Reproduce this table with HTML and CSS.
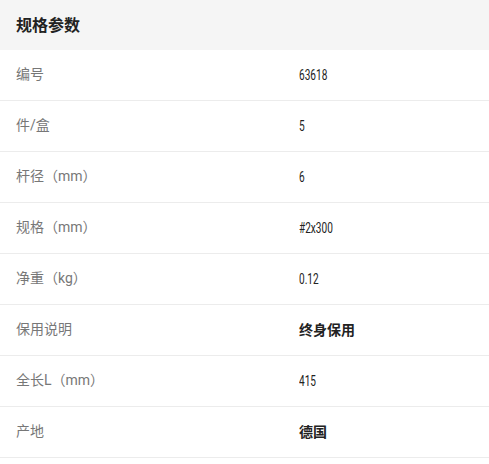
FILE: index.html
```html
<!DOCTYPE html>
<html lang="zh">
<head>
<meta charset="utf-8">
<link rel="stylesheet" href="styles.css">
</head>
<body>
<div class="spec">
  <div class="spec-head">规格参数</div>
  <div class="row"><div class="label">编号</div><div class="value"><span class="num">63618</span></div></div>
  <div class="row"><div class="label">件/盒</div><div class="value"><span class="num">5</span></div></div>
  <div class="row"><div class="label">杆径（mm）</div><div class="value"><span class="num">6</span></div></div>
  <div class="row"><div class="label">规格（mm）</div><div class="value"><span class="num">#2x300</span></div></div>
  <div class="row"><div class="label">净重（kg）</div><div class="value"><span class="num">0.12</span></div></div>
  <div class="row"><div class="label">保用说明</div><div class="value strong">终身保用</div></div>
  <div class="row"><div class="label">全长L（mm）</div><div class="value"><span class="num">415</span></div></div>
  <div class="row"><div class="label">产地</div><div class="value strong">德国</div></div>
</div>
</body>
</html>
```
FILE: styles.css
```css
html, body {
  margin: 0;
  padding: 0;
  background: #fff;
}
body {
  font-family: "Noto Sans CJK SC", "Noto Sans", sans-serif;
  color: #333;
}
.spec {
  width: 489px;
}
.spec-head {
  height: 50px;
  box-sizing: border-box;
  padding: 0 0 2px 16px;
  background: #f5f5f5;
  display: flex;
  align-items: center;
  font-size: 16px;
  font-weight: 700;
  color: #222;
}
.row {
  display: grid;
  grid-template-columns: 299px 1fr;
  height: 50px;
  box-sizing: content-box;
  border-bottom: 1px solid #ececec;
  align-items: center;
  padding-bottom: 0;
}
.label,
.value {
  line-height: 20px;
  margin-bottom: 2px;
}
.label {
  padding-left: 16px;
  font-family: Roboto, "Noto Sans CJK SC", sans-serif;
  font-size: 14px;
  color: #777;
}
.value {
  font-size: 14px;
  color: #222;
}
.value.strong {
  font-weight: 700;
}
.num {
  display: inline-block;
  font-family: Roboto, "Liberation Sans", sans-serif;
  font-size: 14px;
  transform: scaleX(0.72);
  transform-origin: left center;
  color: #222;
}
```
